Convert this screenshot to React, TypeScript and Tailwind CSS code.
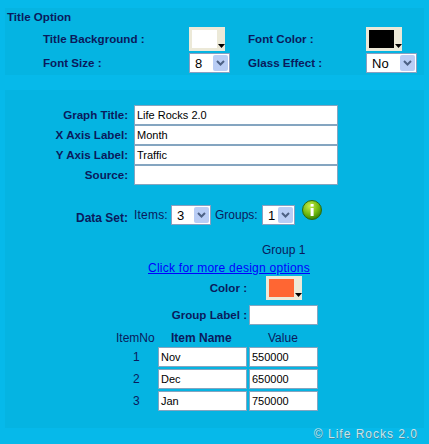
import React from 'react';

const labelCls = "font-bold text-[11.6px] text-[#0a1a5c]";
const inputCls = "h-[20px] border border-[#84a5c0] bg-white px-[2px] text-[11px] leading-[16px] text-black flex items-center";

const Swatch: React.FC<{ color: string }> = ({ color }) => (
  <div className="relative h-[24px] w-[36px] bg-[#ece9d8]">
    <div className="absolute left-[3px] top-[3px] h-[18px] w-[25px]" style={{ backgroundColor: color }} />
    <svg className="absolute bottom-[3px] right-0" width="7" height="4" viewBox="0 0 7 4">
      <path d="M0 0h7L3.5 4z" fill="#000" />
    </svg>
  </div>
);

const Select: React.FC<{ value: string; width: string }> = ({ value, width }) => (
  <div className={`flex h-[20px] items-center justify-between border border-[#8a9fc0] bg-white text-[13px] text-black ${width}`}>
    <span className="pl-[5px] leading-none">{value}</span>
    <div className="mr-[1px] flex h-[16px] w-[15px] items-center justify-center rounded-[2px] bg-[#b9cdf5]">
      <svg width="9" height="6" viewBox="0 0 9 6">
        <path d="M1 1l3.5 3.5L8 1" fill="none" stroke="#4d6185" strokeWidth="2" />
      </svg>
    </div>
  </div>
);

const FormRow: React.FC<{ label: string; value?: string }> = ({ label, value }) => (
  <div className="flex h-[20px] items-center">
    <span className={`w-[123px] text-right ${labelCls}`}>{label}</span>
    <div className={`ml-[6px] w-[204px] ${inputCls}`}>{value}</div>
  </div>
);

const items = [
  { no: 1, name: "Nov", value: "550000" },
  { no: 2, name: "Dec", value: "650000" },
  { no: 3, name: "Jan", value: "750000" },
];

export default function App() {
  return (
    <div className="flex h-[444px] w-[429px] flex-col bg-[#06b9ea] px-[5px] pt-[8px] text-[12px] text-[#0a1a5c] [font-family:'Liberation_Sans',Arial,sans-serif]">
      <div className="h-[67px] bg-[#05b4e2]">
        <div className={`pl-[2px] pt-[1px] leading-[16px] ${labelCls}`}>Title Option</div>
        <div className="mt-[2px] flex h-[24px] items-center pl-[38px]">
          <span className={`w-[146px] ${labelCls}`}>Title Background :</span>
          <Swatch color="#ffffff" />
          <span className={`ml-[23px] w-[118px] ${labelCls}`}>Font Color :</span>
          <Swatch color="#000000" />
        </div>
        <div className="mt-[2px] flex h-[20px] items-center pl-[38px]">
          <span className={`w-[146px] ${labelCls}`}>Font Size :</span>
          <Select value="8" width="w-[41px]" />
          <span className={`ml-[18px] w-[118px] ${labelCls}`}>Glass Effect :</span>
          <Select value="No" width="w-[51px]" />
        </div>
      </div>

      <div className="mt-[15px] h-[338px] bg-[#05b4e2] pt-[15px]">
        <FormRow label="Graph Title:" value="Life Rocks 2.0" />
        <FormRow label="X Axis Label:" value="Month" />
        <FormRow label="Y Axis Label:" value="Traffic" />
        <FormRow label="Source:" />

        <div className="mt-[16px] flex h-[24px] items-end">
          <span className="mb-[-2px] w-[123px] text-right font-bold text-[#0a1a5c]">Data Set:</span>
          <span className="ml-[6px] w-[37px] pb-[1px] tracking-[0.2px]">Items:</span>
          <Select value="3" width="w-[40px]" />
          <span className="ml-[4px] w-[47px] pb-[1px]">Groups:</span>
          <Select value="1" width="w-[33px]" />
          <svg className="mb-[5px] ml-[7px]" width="20" height="20" viewBox="0 0 20 20">
            <defs>
              <radialGradient id="infoGreen" cx="40%" cy="30%" r="75%">
                <stop offset="0%" stopColor="#c8ec4a" />
                <stop offset="60%" stopColor="#6fb80f" />
                <stop offset="100%" stopColor="#2f7a05" />
              </radialGradient>
            </defs>
            <circle cx="10" cy="10" r="9.5" fill="url(#infoGreen)" stroke="#2c6a10" strokeWidth="1" />
            <rect x="8.6" y="4" width="3" height="2.6" fill="#fff" />
            <rect x="8.6" y="8" width="3" height="8" fill="#fff" />
          </svg>
        </div>

        <div className="mt-[18px] pl-[257px] leading-[14px]">Group 1</div>
        <a href="#" className="mt-[4px] block pl-[143px] leading-[14px] tracking-[0.25px] text-[#0000ff] underline">
          Click for more design options
        </a>

        <div className="mt-[1px] flex h-[24px] items-center">
          <span className={`w-[242px] text-right ${labelCls}`}>Color :</span>
          <div className="ml-[19px]">
            <Swatch color="#ff6633" />
          </div>
        </div>
        <div className="mt-[5px] flex h-[20px] items-center">
          <span className={`w-[242px] text-right ${labelCls}`}>Group Label :</span>
          <div className={`ml-[2px] w-[69px] ${inputCls}`} />
        </div>

        <div className="mt-[4px] flex h-[18px] items-center">
          <span className="w-[153px] pl-[111px]">ItemNo</span>
          <span className="w-[91px] pl-[13px] font-bold text-[#0a1a5c]">Item Name</span>
          <span className="w-[69px] pl-[19px]">Value</span>
        </div>
        <div className="flex flex-col gap-[2px]">
          {items.map((item) => (
            <div key={item.no} className="flex h-[20px] items-center">
              <span className="w-[153px] pl-[128px]">{item.no}</span>
              <div className={`w-[89px] ${inputCls}`}>{item.name}</div>
              <div className={`ml-[2px] w-[69px] ${inputCls}`}>{item.value}</div>
            </div>
          ))}
        </div>
      </div>

      <div className="pr-[6px] text-right text-[12px] leading-[12px] tracking-[1px] text-[#c9e3ea] [text-shadow:1px_1px_0_#3d8fa8]">
        © Life Rocks 2.0
      </div>
    </div>
  );
}
